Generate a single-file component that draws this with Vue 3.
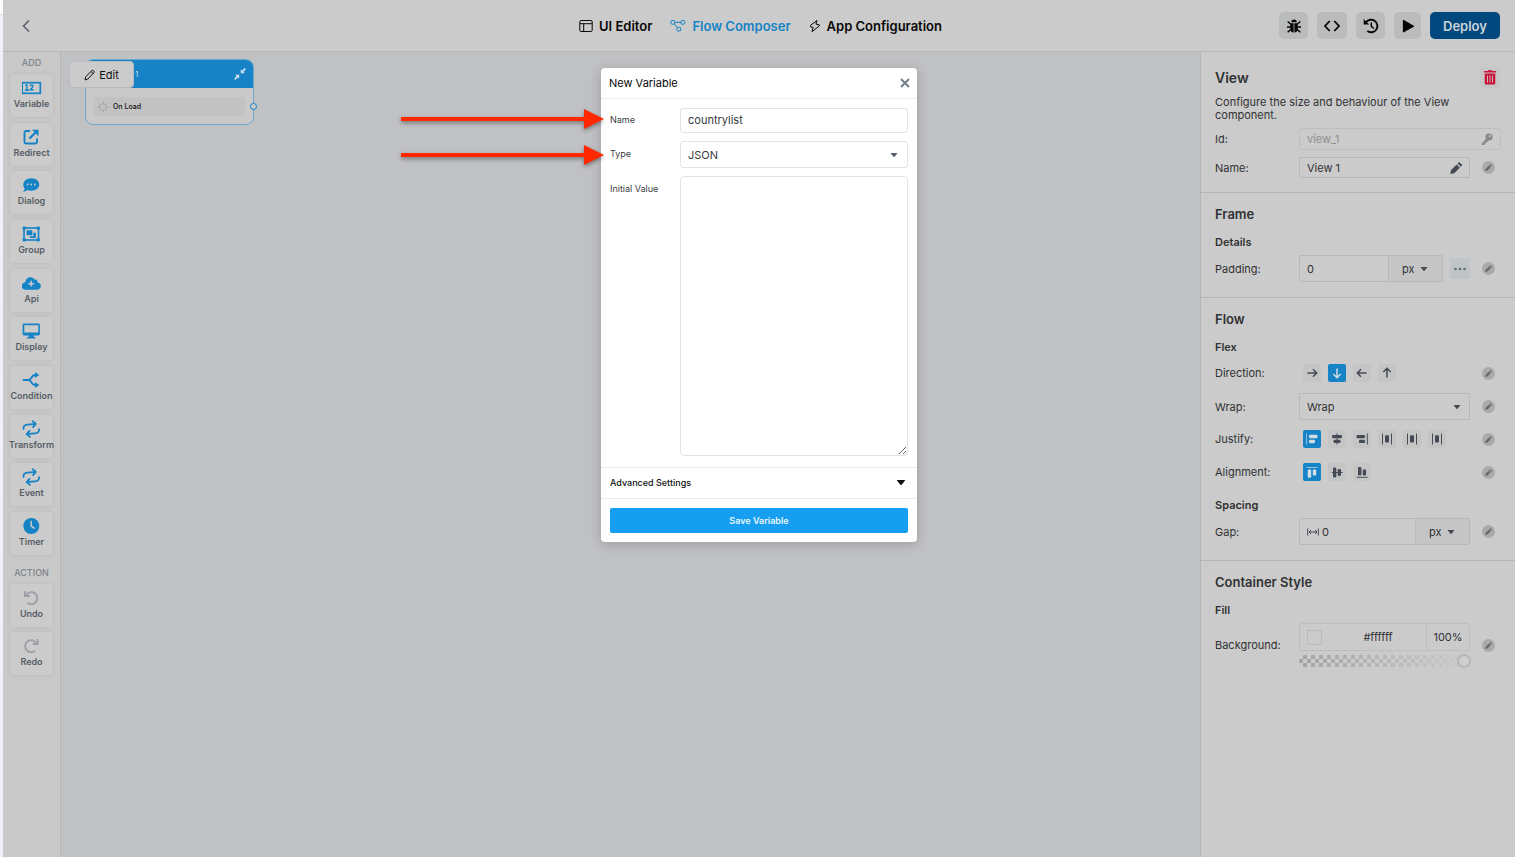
<script setup>
import { ref } from 'vue'

const icons = {
  variable: '<rect x="1.2" y="4.7" width="18.1" height="10.6" fill="none" stroke="currentColor" stroke-width="1.7"/><path d="M4.2 7.4l1.6-.7v5.1M3.8 12.2h4.1M9.2 8.1c.2-1.5 3-1.4 2.7.3-.2 1-1.6 1.9-2.7 3.4h3.3" fill="none" stroke="currentColor" stroke-width="1.4"/>',
  redirect: '<path d="M9 4H5a1.5 1.5 0 0 0-1.5 1.5V15A1.5 1.5 0 0 0 5 16.5h9.5A1.5 1.5 0 0 0 16 15v-3.5" fill="none" stroke="currentColor" stroke-width="1.9"/><path d="M8.5 11.5l6.800-6.800" stroke="currentColor" stroke-width="2.3"/><path d="M11 2.700h6.500v6.500z" fill="currentColor"/>',
  dialog: '<path d="M10.300 3.300c4.500 0 8 2.800 8 6.300s-3.500 6.200-8 6.200c-1.400 0-2.700-.3-3.900-.7-1.300 1-2.900 1.600-4.500 1.600 1-.9 1.600-2 1.800-3-.9-1.100-1.400-2.500-1.400-4.100 0-3.500 3.500-6.300 8-6.300z" fill="currentColor"/><g fill="#cbcbcb"><circle cx="6.600" cy="9.500" r=".9"/><circle cx="10.200" cy="9.500" r=".9"/><circle cx="13.800" cy="9.500" r=".9"/></g>',
  group: '<rect x="3" y="4" width="14.500" height="12" fill="none" stroke="currentColor" stroke-width="1.600"/><g fill="currentColor"><rect x="1.600" y="2.500" width="3.300" height="3.300" rx="1"/><rect x="15.600" y="2.500" width="3.300" height="3.300" rx="1"/><rect x="1.600" y="14.200" width="3.300" height="3.300" rx="1"/><rect x="15.600" y="14.200" width="3.300" height="3.300" rx="1"/><rect x="5.500" y="6.200" width="5.800" height="5" rx=".8"/><path d="M12.300 8.700h2.600v5.200H9v-1.700h3.300z"/></g>',
  api: '<path d="M16.500 9.200c.2-2.300-1.600-3.200-3-2.600C11.100 2.400 4.500 4 4.600 9 2.200 9.800.7 11.200.7 13c0 2.200 1.600 3.700 3.800 3.700h11.700c2.100 0 3.700-1.500 3.700-3.600 0-2-1.300-3.400-3.400-3.900z" fill="currentColor"/><path d="M10.200 7.800v5.800M7.300 10.700h5.800" stroke="#cbcbcb" stroke-width="1.500"/>',
  display: '<path fill-rule="evenodd" d="M3 2.500h14.500a1.400 1.400 0 0 1 1.400 1.400v9.200a1.400 1.400 0 0 1-1.400 1.400h-5l.5 1.500h1.300v1.500H6.200V16h1.300l.5-1.500H3a1.400 1.400 0 0 1-1.400-1.400V3.900A1.400 1.400 0 0 1 3 2.500zm.3 1.700v7.200h14V4.200z" fill="currentColor"/>',
  condition: '<path d="M2.500 10h4.700c1.500 0 2.200-.6 3-2 1-1.900 1.900-3 4-3h1.500M7.200 10c1.500 0 2.200.6 3 2 1 1.900 1.900 3 4 3h1.500" fill="none" stroke="currentColor" stroke-width="1.800" stroke-linecap="round"/><path d="M14 2l4.300 3-4.300 3zM14 12l4.300 3-4.300 3z" fill="currentColor"/>',
  transform: '<path d="M2.500 9.300c0-2.700 1.700-4 4.300-4H15M12.200 2.300l3 3-3 3M18 10.700c0 2.700-1.700 4-4.300 4H5.500M8.300 11.700l-3 3 3 3" fill="none" stroke="currentColor" stroke-width="1.800" stroke-linecap="round" stroke-linejoin="round" transform="rotate(-4 10.200 10)"/>',
  timer: '<circle cx="10.300" cy="10" r="8" fill="currentColor"/><path d="M10.200 5.500v4.700l2.800 2" fill="none" stroke="#cbcbcb" stroke-width="1.500" stroke-linecap="round"/>',
  undo: '<path d="M5 7.500A6 6 0 1 1 6.300 14.600" fill="none" stroke="currentColor" stroke-width="1.900"/><path d="M3.800 3v5h5" fill="none" stroke="currentColor" stroke-width="1.900"/>',
  redo: '<path d="M15.500 7.500A6 6 0 1 0 14.200 14.600" fill="none" stroke="currentColor" stroke-width="1.900"/><path d="M16.700 3v5h-5" fill="none" stroke="currentColor" stroke-width="1.900"/>',
  pen: '<path d="M2.500 18l1-5.500L11.500 4.500l4.500 4.500-8 8zM12.700 3.300l1.300-1.300c.7-.7 1.500-.7 2.200 0l2.300 2.300c.7.7.7 1.500 0 2.200l-1.300 1.300z" fill="currentColor"/>',
  right: '<path d="M4.500 9h9M10 5.300L13.700 9 10 12.700" fill="none" stroke="currentColor" stroke-width="1.500"/>',
  down: '<path d="M9 4.500v9M5.300 10L9 13.700 12.700 10" fill="none" stroke="currentColor" stroke-width="1.500"/>',
  left: '<path d="M13.500 9h-9M8 5.300L4.300 9 8 12.700" fill="none" stroke="currentColor" stroke-width="1.500"/>',
  up: '<path d="M9 13.500v-9M5.300 8L9 4.300 12.700 8" fill="none" stroke="currentColor" stroke-width="1.500"/>',
  jStart: '<path d="M3.600 3.500v11" stroke="currentColor" opacity=".7"/><rect x="6" y="4.700" width="8.500" height="3.600" rx="1.200" fill="currentColor"/><rect x="6" y="9.700" width="6" height="3.600" rx="1.200" fill="currentColor"/>',
  jCenter: '<path d="M9 3.500v11" stroke="currentColor"/><rect x="4" y="5" width="10" height="3.300" rx="1.200" fill="currentColor"/><rect x="5.500" y="9.700" width="7" height="3.300" rx="1.200" fill="currentColor"/>',
  jEnd: '<path d="M14.300 3.500v11" stroke="currentColor"/><rect x="3.500" y="4.900" width="8.500" height="3.400" rx="1.200" fill="currentColor"/><rect x="6" y="9.700" width="6" height="3.400" rx="1.200" fill="currentColor"/>',
  jSpace: '<path d="M4.500 3.500v11M13.500 3.500v11" stroke="currentColor"/><rect x="7" y="5.300" width="4" height="7.200" rx="1" fill="currentColor"/>',
  aStart: '<path d="M3.500 4.500h11" stroke="currentColor" opacity=".7"/><rect x="4.700" y="6.500" width="3.500" height="8.300" rx="1" fill="currentColor"/><rect x="9.800" y="6.500" width="3.500" height="6" rx="1" fill="currentColor"/>',
  aCenter: '<path d="M3.800 9.500h10.700" stroke="currentColor"/><rect x="5" y="4.500" width="3.300" height="10" rx="1.200" fill="currentColor"/><rect x="9.700" y="6" width="3.300" height="7" rx="1.200" fill="currentColor"/>',
  aEnd: '<path d="M3.700 14.300h10.800" stroke="currentColor"/><rect x="5" y="4" width="3.400" height="8.500" rx="1" fill="currentColor"/><rect x="9.700" y="6.500" width="3.400" height="6" rx="1" fill="currentColor"/>'
}

const tools = [
  { label: 'Variable', icon: 'variable' },
  { label: 'Redirect', icon: 'redirect' },
  { label: 'Dialog', icon: 'dialog' },
  { label: 'Group', icon: 'group' },
  { label: 'Api', icon: 'api' },
  { label: 'Display', icon: 'display' },
  { label: 'Condition', icon: 'condition' },
  { label: 'Transform', icon: 'transform' },
  { label: 'Event', icon: 'transform' },
  { label: 'Timer', icon: 'timer' }
]
const history = [
  { label: 'Undo', icon: 'undo' },
  { label: 'Redo', icon: 'redo' }
]
const directions = [
  { name: 'Row', icon: 'right' },
  { name: 'Column', icon: 'down' },
  { name: 'Row reverse', icon: 'left' },
  { name: 'Column reverse', icon: 'up' }
]
const justifications = [
  { name: 'Start', icon: 'jStart' },
  { name: 'Center', icon: 'jCenter' },
  { name: 'End', icon: 'jEnd' },
  { name: 'Space between', icon: 'jSpace' },
  { name: 'Space around', icon: 'jSpace' },
  { name: 'Space evenly', icon: 'jSpace' }
]
const alignments = [
  { name: 'Top', icon: 'aStart' },
  { name: 'Middle', icon: 'aCenter' },
  { name: 'Bottom', icon: 'aEnd' }
]

const direction = ref('Column')
const justify = ref('Start')
const align = ref('Top')
const variableName = ref('countrylist')
const variableType = ref('JSON')
const initialValue = ref('')
const viewName = ref('View 1')
const padding = ref('0')
const gap = ref('0')
const color = ref('#ffffff')
const opacity = ref(100)
</script>

<template>
  <div class="screen">
    <div class="edge"></div>
    <div class="app">
      <header class="topbar">
        <button class="back" aria-label="Back">
          <svg width="10" height="14" viewBox="0 0 10 14"><path d="M8 1.500L2.500 7 8 12.500" fill="none" stroke="currentColor" stroke-width="1.500" /></svg>
        </button>
        <nav class="tabs">
          <a href="#ui">
            <svg width="14" height="14" viewBox="0 0 14 14" fill="none" stroke="currentColor"><rect x=".8" y="1.500" width="12.400" height="11" rx="1.300" /><path d="M1 4.700h12M4.700 4.700v7.800" /></svg>
            UI Editor
          </a>
          <a href="#flow" class="current">
            <svg width="16" height="14" viewBox="0 0 16 14" fill="none" stroke="currentColor"><rect x="1" y="1.500" width="3.700" height="3.700" rx="1" /><rect x="11" y="1.500" width="3.700" height="3.700" rx="1" /><rect x="7" y="8.300" width="3.700" height="3.700" rx="1" /><path d="M4.700 3.300H11M4.200 4.900l3.200 3.900" /></svg>
            Flow Composer
          </a>
          <a href="#config">
            <svg width="12" height="14" viewBox="0 0 12 14" fill="none" stroke="currentColor" stroke-linejoin="round"><path d="M8 1.500L1.500 6.300v1.500l2.700.6L3 12.700 10.200 7V5.700l-3.300-.6z" /></svg>
            App Configuration
          </a>
        </nav>
        <div class="actions">
          <button class="square" aria-label="Debug">
            <svg width="16" height="16" viewBox="0 0 16 16"><path d="M5.200 4.200a2.800 2.800 0 0 1 5.600 0z" fill="currentColor" /><path d="M4.200 5.200h3.400v9.300c-2-.1-3.400-1.500-3.400-3.500zM8.400 5.200h3.400V11c0 2-1.400 3.400-3.400 3.500z" fill="currentColor" /><path d="M1.700 3.500l2.800 2.500M14.300 3.500L11.500 6M1 9h3.500M15 9h-3.500M1.700 14.300l2.800-2.500M14.300 14.300l-2.800-2.500" stroke="currentColor" stroke-width="1.500" /></svg>
          </button>
          <button class="square code" aria-label="Code">
            <svg width="18" height="16" viewBox="0 0 18 16"><path d="M6.700 3L2 8l4.700 5M11.300 3L16 8l-4.700 5" fill="none" stroke="currentColor" stroke-width="1.800" /></svg>
          </button>
          <button class="square" aria-label="History">
            <svg width="16" height="16" viewBox="0 0 16 16" fill="none" stroke="currentColor"><path d="M3 4.300A6.300 6.300 0 1 1 4.300 13" stroke-width="1.900" /><path d="M.7 1v5.500h5.500z" fill="currentColor" stroke="none" /><path d="M8.300 4.500v4l2.500 1.900" stroke-width="1.500" /></svg>
          </button>
          <button class="square play" aria-label="Play">
            <svg width="14" height="16" viewBox="0 0 14 16"><path d="M2.500 2.500v11.300L12.500 8.200z" fill="currentColor" stroke="currentColor" stroke-width="1.300" stroke-linejoin="round" /></svg>
          </button>
          <button class="deploy">Deploy</button>
        </div>
      </header>

      <div class="workspace">
        <aside class="toolbar">
          <h2>ADD</h2>
          <div class="tools">
            <button v-for="t in tools" :key="t.label" class="tile">
              <svg width="20" height="20" viewBox="1 0 20 20" v-html="icons[t.icon]"></svg>
              <span>{{ t.label }}</span>
            </button>
          </div>
          <h2 class="second">ACTION</h2>
          <div class="history">
            <button v-for="t in history" :key="t.label" class="tile muted">
              <svg width="20" height="20" viewBox="1 0 20 20" v-html="icons[t.icon]"></svg>
              <span>{{ t.label }}</span>
            </button>
          </div>
        </aside>

        <main class="canvas">
          <article class="node">
            <div class="node-head">
              <span>1</span>
              <svg width="12" height="12" viewBox="0 0 12 12"><path d="M11.300.7L8.200 3.800M.7 11.300l3.100-3.100" stroke="currentColor" stroke-width="1.700" /><path d="M6.800 1.200v4h4zM1.200 6.800h4v4z" fill="currentColor" /></svg>
            </div>
            <div class="node-body">
              <div class="event">
                <svg width="10" height="10" viewBox="0 0 10 10"><path d="M5 0v2.500M5 7.500V10M0 5h2.500M7.500 5H10M1.500 1.500l1.700 1.700M6.800 6.800l1.700 1.700M8.500 1.500L6.800 3.200M3.200 6.800L1.500 8.500" stroke="currentColor" /></svg>
                On Load
              </div>
            </div>
            <i class="port"></i>
          </article>
          <button class="edit">
            <svg width="12" height="12" viewBox="0 0 12 12" fill="none" stroke="currentColor"><path d="M1 11l.7-3.200L8 1.500c.8-.8 2.700.8 2 2L3.900 10zM7 2.500l2.300 2.300" /></svg>
            Edit
          </button>
        </main>

        <aside class="inspector">
          <section>
            <div class="title">
              <h1>View</h1>
              <button class="trash" aria-label="Delete view">
                <svg width="14" height="16" viewBox="0 0 14 16"><path d="M1 2h4l.6-1h2.800L9 2h4v1.500H1zM1.700 4.500h10.600V14a1.500 1.500 0 0 1-1.500 1.500H3.200A1.500 1.500 0 0 1 1.700 14z" fill="currentColor" /><path d="M4.500 6.500v7M7 6.500v7M9.500 6.500v7" stroke="#cbcbcb" stroke-width=".9" /></svg>
              </button>
            </div>
            <p>Configure the size and behaviour of the View component.</p>
            <div class="line id-line">
              <label for="view-id">Id:</label>
              <div class="field faint">
                <input id="view-id" value="view_1" disabled />
                <svg width="12" height="12" viewBox="0 0 12 12"><circle cx="8" cy="4" r="3.600" fill="currentColor" /><circle cx="8.900" cy="3.100" r="1" fill="#cbcbcb" /><path d="M5.500 5.500L.8 10.200V12h2.700v-1.500H5V9h1.200l1.500-1.500z" fill="currentColor" /></svg>
              </div>
            </div>
            <div class="line name-line">
              <label for="view-name">Name:</label>
              <div class="field">
                <input id="view-name" v-model="viewName" />
                <svg width="12" height="12" viewBox="2 1 17 17" v-html="icons.pen"></svg>
              </div>
              <button class="dot" aria-label="Bind name"><svg width="7" height="7" viewBox="2 1 17 17" v-html="icons.pen"></svg></button>
            </div>
          </section>

          <section class="frame">
            <h2>Frame</h2>
            <h3>Details</h3>
            <div class="line">
              <label for="padding">Padding:</label>
              <div class="split">
                <div class="field joined">
                  <input id="padding" v-model="padding" />
                  <div class="unit">
                    <select aria-label="Padding unit"><option>px</option></select>
                    <svg width="8" height="6" viewBox="0 0 8 6"><path d="M.5 1h7L5 4.300a1.300 1.300 0 0 1-2 0z" fill="currentColor" /></svg>
                  </div>
                </div>
                <button class="more" aria-label="Padding sides">
                  <svg width="12" height="4" viewBox="0 0 12 4" fill="currentColor"><circle cx="1.500" cy="2" r="1.300" /><circle cx="6" cy="2" r="1.300" /><circle cx="10.500" cy="2" r="1.300" /></svg>
                </button>
              </div>
              <button class="dot" aria-label="Bind padding"><svg width="7" height="7" viewBox="2 1 17 17" v-html="icons.pen"></svg></button>
            </div>
          </section>

          <section class="flow">
            <h2>Flow</h2>
            <h3>Flex</h3>
            <div class="line short">
              <span id="dir">Direction:</span>
              <div class="choices" role="group" aria-labelledby="dir">
                <button v-for="d in directions" :key="d.name" :aria-label="d.name" :class="{ on: direction === d.name }" @click="direction = d.name">
                  <svg width="18" height="18" viewBox="0 0 18 18" v-html="icons[d.icon]"></svg>
                </button>
              </div>
              <button class="dot" aria-label="Bind direction"><svg width="7" height="7" viewBox="2 1 17 17" v-html="icons.pen"></svg></button>
            </div>
            <div class="line wrap-line">
              <label for="wrap">Wrap:</label>
              <div class="field tall">
                <select id="wrap"><option>Wrap</option></select>
                <svg width="8" height="6" viewBox="0 0 8 6"><path d="M.5 1h7L5 4.300a1.300 1.300 0 0 1-2 0z" fill="currentColor" /></svg>
              </div>
              <button class="dot" aria-label="Bind wrap"><svg width="7" height="7" viewBox="2 1 17 17" v-html="icons.pen"></svg></button>
            </div>
            <div class="line short">
              <span id="just">Justify:</span>
              <div class="choices" role="group" aria-labelledby="just">
                <button v-for="j in justifications" :key="j.name" :aria-label="j.name" :class="{ on: justify === j.name }" @click="justify = j.name">
                  <svg width="18" height="18" viewBox="0 0 18 18" v-html="icons[j.icon]"></svg>
                </button>
              </div>
              <button class="dot" aria-label="Bind justify"><svg width="7" height="7" viewBox="2 1 17 17" v-html="icons.pen"></svg></button>
            </div>
            <div class="line short align-line">
              <span id="align">Alignment:</span>
              <div class="choices" role="group" aria-labelledby="align">
                <button v-for="a in alignments" :key="a.name" :aria-label="a.name" :class="{ on: align === a.name }" @click="align = a.name">
                  <svg width="18" height="18" viewBox="0 0 18 18" v-html="icons[a.icon]"></svg>
                </button>
              </div>
              <button class="dot" aria-label="Bind alignment"><svg width="7" height="7" viewBox="2 1 17 17" v-html="icons.pen"></svg></button>
            </div>
            <h3 class="spacing">Spacing</h3>
            <div class="line">
              <label for="gap">Gap:</label>
              <div class="field joined gap-field">
                <svg class="lead" width="12" height="8" viewBox="0 0 12 8"><path d="M.7.500v7M11.300.5v7M2 4h8M4 2L2 4l2 2M8 2l2 2-2 2" fill="none" stroke="currentColor" /></svg>
                <input id="gap" v-model="gap" />
                <div class="unit">
                  <select aria-label="Gap unit"><option>px</option></select>
                  <svg width="8" height="6" viewBox="0 0 8 6"><path d="M.5 1h7L5 4.300a1.300 1.300 0 0 1-2 0z" fill="currentColor" /></svg>
                </div>
              </div>
              <button class="dot" aria-label="Bind gap"><svg width="7" height="7" viewBox="2 1 17 17" v-html="icons.pen"></svg></button>
            </div>
          </section>

          <section class="container-style">
            <h2>Container Style</h2>
            <h3>Fill</h3>
            <div class="line fill-line">
              <label for="background">Background:</label>
              <div class="paint">
                <div class="field faint color-field">
                  <i class="swatch"></i>
                  <input id="background" class="hex" v-model="color" />
                  <output class="percent">{{ opacity }}%</output>
                </div>
                <input class="alpha" type="range" min="0" max="100" v-model="opacity" aria-label="Background opacity" />
              </div>
              <button class="dot" aria-label="Bind background"><svg width="7" height="7" viewBox="2 1 17 17" v-html="icons.pen"></svg></button>
            </div>
          </section>
        </aside>
      </div>

      <div class="layer">
        <form class="modal" role="dialog" aria-labelledby="modal-title" @submit.prevent>
          <div class="modal-head">
            <h2 id="modal-title">New Variable</h2>
            <button type="button" class="close" aria-label="Close">
              <svg width="12" height="12" viewBox="0 0 12 12"><path d="M2 2l8 8M10 2l-8 8" stroke="currentColor" stroke-width="1.900" /></svg>
            </button>
          </div>
          <div class="modal-body">
            <label for="var-name">Name</label>
            <input id="var-name" class="box name-box" v-model="variableName" />
            <label for="var-type">Type</label>
            <div class="picker">
              <select id="var-type" class="box" v-model="variableType"><option>JSON</option></select>
              <svg width="8" height="6" viewBox="0 0 8 6"><path d="M.5 1h7L5 4.300a1.300 1.300 0 0 1-2 0z" fill="currentColor" /></svg>
            </div>
            <label for="var-value" class="top">Initial Value</label>
            <textarea id="var-value" class="box" v-model="initialValue"></textarea>
          </div>
          <button type="button" class="advanced">
            Advanced Settings
            <svg width="10" height="7" viewBox="0 0 10 7"><path d="M.7 1h8.600L6.200 5.300a1.600 1.600 0 0 1-2.400 0z" fill="currentColor" /></svg>
          </button>
          <div class="modal-foot">
            <button class="save">Save Variable</button>
          </div>
          <svg class="pointer first" width="210" height="30" viewBox="0 0 210 30"><path d="M0 8h183V0l20 10-20 10v-8H0z" fill="#ff2800" /></svg>
          <svg class="pointer next" width="210" height="30" viewBox="0 0 210 30"><path d="M0 8h183V0l20 10-20 10v-8H0z" fill="#ff2800" /></svg>
        </form>
      </div>
    </div>
  </div>
</template>

<style>
body { background: #cbcbcb; }
</style>

<style scoped>
.screen { display: flex; min-height: 100vh; font-family: Inter, "Liberation Sans", sans-serif; color: #303234; }
.screen *, .screen *::before { box-sizing: border-box; }
button, input, select, textarea { font: inherit; color: inherit; margin: 0; padding: 0; border: 0; background: none; outline: 0; }
select { appearance: none; }
h1, h2, h3, p { margin: 0; }
svg { display: block; flex: none; }
.edge { width: 3px; background: linear-gradient(#fff 14px, #ddd 14px, #ddd 15px, #f0f1f6 15px); }
.app { position: relative; flex: 1; min-width: 0; display: flex; flex-direction: column; background: #cbcbcb; }

.topbar { display: grid; grid-template-columns: 1fr auto 1fr; align-items: center; height: 52px; padding: 0 15px 0 18px; border-bottom: 1px solid #b7b8bc; }
.back { justify-self: start; color: #565d68; }
.tabs { display: flex; gap: 18px; font-size: 13px; line-height: 16px; font-weight: 600; }
.tabs a { display: flex; align-items: center; gap: 6px; color: #080808; text-decoration: none; }
.tabs a.current { color: #1583c5; }
.actions { justify-self: end; display: flex; gap: 9px; }
.square { display: flex; align-items: center; justify-content: center; width: 29px; height: 27px; border-radius: 5px; background: #babbbb; color: #050505; }
.square.code { width: 30px; }
.square.play { width: 27px; }
.deploy { width: 70px; height: 27px; border-radius: 5px; background: #00487d; color: #ccd3d8; font-size: 13px; font-weight: 600; }

.workspace { flex: 1; display: flex; }
.toolbar { width: 58px; padding: 0 7px; border-right: 1px solid #b5b6ba; display: flex; flex-direction: column; align-items: center; background: #c9c9c9; }
.toolbar h2 { height: 22px; font-size: 9px; line-height: 22px; font-weight: 500; color: #7f8389; }
.toolbar .second { height: 18px; margin: 9px 0 2px; line-height: 18px; }
.tools { display: flex; flex-direction: column; justify-content: space-between; height: 481px; }
.history { display: flex; flex-direction: column; gap: 5px; }
.tile { display: flex; flex-direction: column; align-items: center; width: 43px; height: 43px; padding-top: 4px; border-radius: 4px; background: #cbcbcb; box-shadow: 0 0 4px rgba(0, 0, 0, .08); color: #1583c5; }
.tile span { font-size: 9px; line-height: 12px; font-weight: 600; color: #565d66; white-space: nowrap; }
.tile.muted { color: #9da1a7; }

.canvas { flex: 1; position: relative; background: #c0c1c3; }
.node { position: absolute; left: 24px; top: 7px; width: 169px; border: 1px solid #6daace; border-radius: 8px; background: #c9c9c9; }
.node-head { display: flex; justify-content: space-between; align-items: center; height: 28px; padding: 0 7px 0 49px; border-radius: 7px 7px 0 0; background: #1583c5; color: #cde0ec; font-size: 8px; }
.node-body { padding: 9px 8px 8px; }
.event { display: flex; align-items: center; gap: 5px; height: 19px; padding-left: 4px; border-radius: 2px; background: #c2c2c2; color: #111; font-size: 7px; font-weight: 500; }
.event svg { color: #909398; }
.port { position: absolute; right: -4px; top: 43px; width: 7px; height: 7px; border: 1px solid #1583c5; border-radius: 50%; background: #c9c9c9; }
.edit { position: absolute; left: 8px; top: 9px; display: flex; align-items: center; justify-content: center; gap: 3px; width: 65px; height: 27px; border: 1px solid #b7bbc0; border-radius: 4px; background: #cbcbcb; color: #111; font-size: 11px; }

.inspector { width: 315px; border-left: 1px solid #b3b5ba; font-size: 11px; }
.inspector section { padding: 14px; border-bottom: 1px solid #b3b5bd; }
.inspector section.frame, .inspector section.flow { padding: 13px 14px 15px; }
.inspector section.container-style { padding-top: 13px; border-bottom: 0; }
.title { display: flex; justify-content: space-between; align-items: center; height: 22px; padding-right: 1px; }
h1 { font-size: 14px; font-weight: 600; }
.trash { display: flex; align-items: center; justify-content: center; width: 20px; height: 21px; border-radius: 2px; background: #c6c6c6; color: #ca1138; }
.inspector p { margin-top: 8px; font-size: 11px; line-height: 13px; padding-right: 40px; }
.inspector h2 { font-size: 13px; line-height: 16px; font-weight: 600; }
.inspector h3 { margin-top: 13px; font-size: 11px; line-height: 14px; font-weight: 600; }
.line { display: grid; grid-template-columns: 84px 171px 13px; align-items: center; min-height: 27px; margin-top: 6px; }
.line .dot { margin-left: 12px; }
.line.id-line { grid-template-columns: 84px 1fr; min-height: 22px; }
.line.name-line { min-height: 21px; margin-top: 7px; }
.field { display: flex; align-items: center; height: 22px; padding: 0 7px; border: 1px solid #b4b8c0; border-radius: 2px; }
.name-line .field { height: 21px; }
.field > input, .field > select { flex: 1; min-width: 0; width: 0; }
.field > svg { color: #454b55; }
.field.faint { border-color: #bebebe; color: #8f9091; border-radius: 3px; }
.field.faint svg { color: #88898a; }
.field.tall { height: 27px; padding-right: 8px; }
.dot { display: flex; align-items: center; justify-content: center; width: 13px; height: 13px; border-radius: 50%; background: #aaaaab; color: #68696a; }
.split { display: flex; align-items: center; gap: 7px; }
.split .field { flex: 1; }
.field.joined { height: 27px; padding-right: 0; }
.unit { display: flex; align-items: center; align-self: stretch; gap: 6px; width: 54px; padding: 0 14px 0 13px; border-left: 1px solid #b4b8c0; background: #c5c5c6; color: #454b55; }
.unit select { flex: 1; min-width: 0; color: #303234; }
.lead { margin-right: 3px; }
.more { display: flex; align-items: center; justify-content: center; width: 20px; height: 21px; border-radius: 2px; background: #bfc5c6; color: #626973; }
.line.short { min-height: 18px; margin-top: 10px; }
.line.wrap-line { margin-top: 11px; }
.line.align-line { margin-top: 15px; }
.inspector h3.spacing { margin-top: 17px; }
.choices { display: flex; gap: 7px; padding-left: 4px; }
.choices button { width: 18px; height: 18px; border-radius: 2px; background: #c5c5c5; color: #454b55; }
.choices .on { background: #1583c5; color: #d3dde4; }
.paint { display: flex; flex-direction: column; gap: 4px; }
.field.color-field { height: 28px; padding-right: 0; color: #303234; }
.swatch { width: 15px; height: 15px; border: 1px solid #bababa; }
.hex { text-align: center; padding-left: 8px; }
.percent { display: flex; align-items: center; justify-content: center; align-self: stretch; width: 43px; border-left: 1px solid #bebebe; }
.alpha { appearance: none; width: 171px; height: 12px; border-radius: 6px; background: linear-gradient(90deg, rgba(203, 203, 203, 0), #cbcbcb), repeating-conic-gradient(#a4a4a4 0 25%, #cbcbcb 0 50%) 0 0 / 8px 8px; }
.alpha::-webkit-slider-thumb { appearance: none; width: 12px; height: 12px; border: 1px solid #b5b5b5; border-radius: 50%; background: #cfcfcf; box-shadow: 0 0 2px rgba(0, 0, 0, .3); }

.layer { position: absolute; inset: 0; display: flex; justify-content: center; align-items: flex-start; padding-top: 68px; }
.modal { position: relative; width: 316px; border-radius: 4px; background: #fff; box-shadow: 0 2px 12px rgba(0, 0, 0, .2); }
.modal-head { display: flex; justify-content: space-between; align-items: center; height: 31px; padding: 0 6px 0 8px; border-bottom: 1px solid #eceff1; }
.modal-head h2 { font-size: 11px; font-weight: 400; color: #080808; }
.close { color: #737b87; }
.modal-body { display: grid; grid-template-columns: 70px 1fr; row-gap: 8px; align-items: center; padding: 9px 9px 11px; font-size: 9px; color: #3b3d40; }
.modal-body label { padding-bottom: 2px; }
.modal-body .top { align-self: start; padding-top: 7px; }
.box { width: 100%; border: 1px solid #e0e3e8; border-radius: 3px; padding: 0 7px; font-size: 11px; color: #36393d; }
.name-box { height: 25px; padding-bottom: 1px; }
.picker { position: relative; height: 27px; }
.picker select { height: 27px; }
.picker svg { position: absolute; right: 10px; top: 11px; color: #565e6b; }
textarea.box { display: block; height: 280px; padding: 7px; resize: vertical; border-radius: 4px; }
.advanced { display: flex; justify-content: space-between; align-items: center; width: 100%; height: 32px; padding: 0 11px 1px 9px; border-top: 1px solid #e9edf0; border-bottom: 1px solid #e9edf0; font-size: 9px; font-weight: 500; color: #111; }
.modal-foot { padding: 9px; }
.save { display: block; width: 100%; height: 25px; border-radius: 2px; background: #169ff0; color: #e9f6fe; font-size: 9px; font-weight: 600; }
.pointer { position: absolute; left: -200px; filter: drop-shadow(0 2px 2px rgba(0, 0, 0, .4)); overflow: visible; pointer-events: none; }
.first { top: 41px; }
.next { top: 77px; }
</style>
